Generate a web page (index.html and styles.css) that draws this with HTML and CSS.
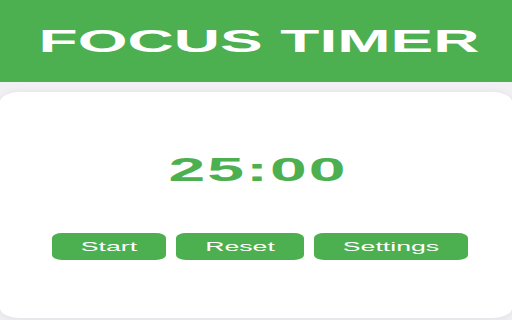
FILE: index.html
```html
<!DOCTYPE html>
<html lang="en">
<head>
    <meta charset="UTF-8">
    <meta name="viewport" content="width=device-width, initial-scale=1.0">
    <title>Focus Timer</title>
    <link rel="stylesheet" href="styles.css">
</head>

<body>
    <div class="popup">
        <header class="header">
            <h1>FOCUS TIMER</h1>
        </header>
        <div class="card">
            <div class="timer" id="timer">25:00</div>
            <div class="controls">
                <button class="btn" id="startBtn">Start</button>
                <button class="btn" id="resetBtn">Reset</button>
                <button class="btn" id="settingsBtn">Settings</button>
            </div>
        </div>
    </div>
</body>

</html>
```

FILE: styles.css
```css
html,
body {
    margin: 0;
    height: 100%;
    overflow: hidden;
}

body {
    font-family: "Liberation Sans", Arial, sans-serif;
    background-color: #f0f0f5;
}

.popup {
    width: 256px;
    transform: scaleX(2);
    transform-origin: 0 0;
}

.header {
    height: 82px;
    background-color: #4caf50;
    display: flex;
    align-items: center;
    justify-content: center;
    padding-left: 3px;
}

.header h1 {
    margin: 0;
    font-size: 32px;
    font-weight: bold;
    color: white;
}

.card {
    margin-top: 10px;
    height: 226px;
    background-color: #ffffff;
    border-radius: 10px;
    box-shadow: 0 1px 6px rgba(0, 0, 0, 0.08);
    text-align: center;
}

.timer {
    padding-top: 59px;
    padding-left: 2px;
    margin-bottom: 45px;
    font-size: 33px;
    line-height: 37px;
    letter-spacing: 1px;
    font-weight: bold;
    color: #4caf50;
}

.controls {
    display: flex;
    justify-content: center;
    gap: 5px;
    padding-left: 4px;
}

.btn {
    font-family: "Liberation Sans", Arial, sans-serif;
    font-size: 13.33px;
    line-height: 15px;
    padding: 6px 14.5px;
    border: none;
    border-radius: 5px;
    background-color: #4caf50;
    color: white;
}
```
